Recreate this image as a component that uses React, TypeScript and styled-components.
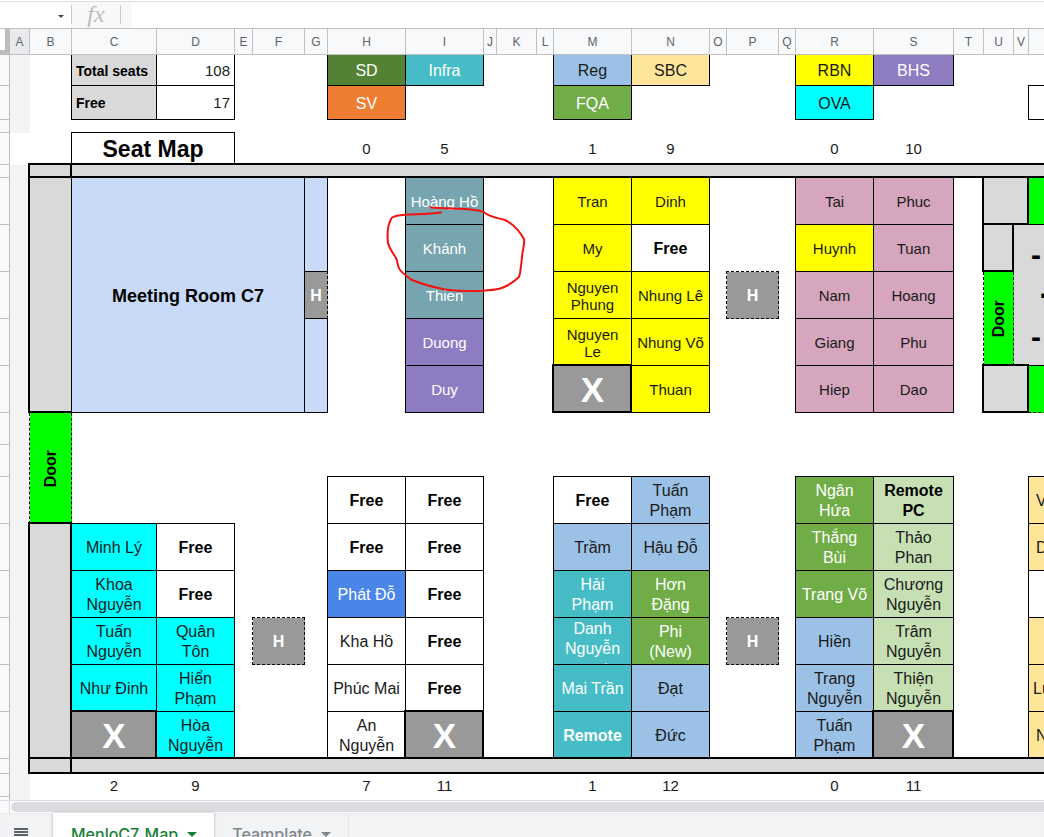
import React from "react";
import styled, { createGlobalStyle, css } from "styled-components";

const GlobalStyle = createGlobalStyle`
  * { box-sizing: border-box; }
  html, body { margin: 0; padding: 0; background: #fff; }
  body { font-family: "Liberation Sans", Arial, sans-serif; color: #000; overflow: hidden; }
`;

/* ---------- data ---------- */

const COLUMNS: [string, number][] = [
  ["A", 20], ["B", 42], ["C", 85], ["D", 78], ["E", 18], ["F", 52], ["G", 23],
  ["H", 78], ["I", 78], ["J", 13], ["K", 40], ["L", 17], ["M", 78], ["N", 78],
  ["O", 17], ["P", 52], ["Q", 17], ["R", 78], ["S", 80], ["T", 30], ["U", 30],
  ["V", 15], ["W", 78],
];

const ROWS = [31, 34, 13, 32, 13, 47, 47, 47, 47, 47, 32, 32, 47, 47, 47, 47, 47, 47, 15, 23, 3];

type Edge = "none" | "thin" | "thick" | "wall" | "dashed" | "dashedSides";

interface Cell {
  row: number;
  col: string;
  text?: string;
  fill?: string;
  edge?: Edge;
  rows?: number;
  cols?: number;
  size?: number;
  line?: number;
  bold?: boolean;
  color?: string;
  align?: "left" | "center" | "right";
  indent?: number;
  vertical?: boolean;
}

const C = {
  wall: "#d9d9d9",
  gutter: "#f3f3f3",
  door: "#00ff00",
  room: "#c9daf8",
  gray: "#999999",
  yellow: "#ffff00",
  cyan: "#00ffff",
  pink: "#d5a6bd",
  steel: "#76a5af",
  purple: "#8e7cc3",
  teal: "#46bdc6",
  blue: "#9bc1e6",
  green: "#70ad47",
  mint: "#c6e0b4",
  sand: "#ffe599",
  royal: "#4a86e8",
  white: "#ffffff",
};

const WHITE_TEXT = [C.steel, C.purple, C.teal, C.green, C.royal, "#548235", "#ed7d31"];

const seat = (row: number, col: string, text: string, fill: string = C.white, extra: Partial<Cell> = {}): Cell => ({
  row, col, text, fill, edge: "thin",
  size: row < 10 && row > 4 ? 15 : 16,
  line: row < 10 ? 17 : 20,
  color: WHITE_TEXT.includes(fill) ? "#fff" : "#1a1a1a",
  ...extra,
});
const free = (row: number, col: string) => seat(row, col, "Free", C.white, { bold: true, size: 16, color: "#000" });
const count = (row: number, col: string, text: string): Cell => ({ row, col, text, size: 15, color: "#1a1a1a" });
const blocked = (row: number, col: string): Cell => ({
  row, col, text: "X", fill: C.gray, edge: "thick", bold: true, color: "#fff", size: 35, line: 40,
});
const hub = (row: number, col: string): Cell => ({
  row, col, text: "H", fill: C.gray, edge: "dashed", bold: true, color: "#fff", size: 16,
});
const door = (row: number, col: string, rows: number): Cell => ({
  row, col, rows, text: "Door", fill: C.door, edge: "dashedSides", bold: true, size: 16, vertical: true,
});
const block = (row: number, col: string, fill: string, edge: Edge, rows = 1, cols = 1): Cell => ({
  row, col, fill, edge, rows, cols,
});

const CELLS: Cell[] = [
  block(0, "A", C.gutter, "none", 3),
  block(4, "A", C.gutter, "none", 17),

  { row: 0, col: "C", text: "Total seats", fill: C.wall, edge: "thin", bold: true, size: 14, align: "left" },
  { row: 0, col: "D", text: "108", edge: "thin", size: 15, align: "right", color: "#1a1a1a" },
  { row: 1, col: "C", text: "Free", fill: C.wall, edge: "thin", bold: true, size: 14, align: "left" },
  { row: 1, col: "D", text: "17", edge: "thin", size: 15, align: "right", color: "#1a1a1a" },
  { row: 3, col: "C", cols: 2, text: "Seat Map", fill: C.white, edge: "thin", bold: true, size: 23, line: 28 },

  seat(0, "H", "SD", "#548235"),
  seat(0, "I", "Infra", C.teal),
  seat(1, "H", "SV", "#ed7d31"),
  seat(0, "M", "Reg", C.blue),
  seat(0, "N", "SBC", C.sand),
  seat(1, "M", "FQA", C.green),
  seat(0, "R", "RBN", C.yellow),
  seat(0, "S", "BHS", C.purple),
  seat(1, "R", "OVA", C.cyan),
  block(1, "W", C.white, "thin"),

  count(3, "H", "0"), count(3, "I", "5"), count(3, "M", "1"),
  count(3, "N", "9"), count(3, "R", "0"), count(3, "S", "10"),

  block(4, "B", C.wall, "thick"),
  block(4, "C", C.wall, "thick", 1, 21),
  block(5, "B", C.wall, "wall", 5),
  { row: 5, col: "C", rows: 5, cols: 4, text: "Meeting Room C7", fill: C.room, edge: "thin", bold: true, size: 18, line: 22 },
  block(5, "G", C.room, "thin", 2),
  hub(7, "G"),
  block(8, "G", C.room, "thin", 2),

  seat(5, "I", "Hoàng Hồ", C.steel),
  seat(6, "I", "Khánh", C.steel),
  seat(7, "I", "Thien", C.steel),
  seat(8, "I", "Duong", C.purple),
  seat(9, "I", "Duy", C.purple),

  seat(5, "M", "Tran", C.yellow),
  seat(6, "M", "My", C.yellow),
  seat(7, "M", "Nguyen\nPhung", C.yellow),
  seat(8, "M", "Nguyen\nLe", C.yellow),
  blocked(9, "M"),
  seat(5, "N", "Dinh", C.yellow),
  free(6, "N"),
  seat(7, "N", "Nhung Lê", C.yellow),
  seat(8, "N", "Nhung Võ", C.yellow),
  seat(9, "N", "Thuan", C.yellow),

  hub(7, "P"),

  seat(5, "R", "Tai", C.pink),
  seat(6, "R", "Huynh", C.yellow),
  seat(7, "R", "Nam", C.pink),
  seat(8, "R", "Giang", C.pink),
  seat(9, "R", "Hiep", C.pink),
  seat(5, "S", "Phuc", C.pink),
  seat(6, "S", "Tuan", C.pink),
  seat(7, "S", "Hoang", C.pink),
  seat(8, "S", "Phu", C.pink),
  seat(9, "S", "Dao", C.pink),

  block(5, "U", C.wall, "thick", 1, 2),
  block(5, "W", C.door, "thin"),
  block(6, "U", C.wall, "thick"),
  {
    row: 6, col: "V", rows: 3, cols: 2, text: "-\n ·\n-", fill: C.wall, edge: "thin",
    bold: true, size: 30, line: 41, align: "left", indent: 17,
  },
  door(7, "U", 2),
  block(9, "U", C.wall, "thick", 1, 2),
  block(9, "W", C.door, "dashed"),

  door(10, "B", 3),
  block(13, "B", C.wall, "thick", 5),

  seat(13, "C", "Minh Lý", C.cyan),
  seat(14, "C", "Khoa\nNguyễn", C.cyan),
  seat(15, "C", "Tuấn\nNguyễn", C.cyan),
  seat(16, "C", "Như Đinh", C.cyan),
  blocked(17, "C"),
  free(13, "D"),
  free(14, "D"),
  seat(15, "D", "Quân\nTôn", C.cyan),
  seat(16, "D", "Hiển\nPhạm", C.cyan),
  seat(17, "D", "Hòa\nNguyễn", C.cyan),

  hub(15, "F"),

  free(12, "H"),
  free(13, "H"),
  seat(14, "H", "Phát Đỗ", C.royal),
  seat(15, "H", "Kha Hồ"),
  seat(16, "H", "Phúc Mai"),
  seat(17, "H", "An\nNguyễn"),
  free(12, "I"),
  free(13, "I"),
  free(14, "I"),
  free(15, "I"),
  free(16, "I"),
  blocked(17, "I"),

  free(12, "M"),
  seat(13, "M", "Trầm", C.blue),
  seat(14, "M", "Hải\nPhạm", C.teal),
  seat(15, "M", "Danh\nNguyễn\nremote", C.teal),
  seat(16, "M", "Mai Trần", C.teal),
  seat(17, "M", "Remote", C.teal, { bold: true }),
  seat(12, "N", "Tuấn\nPhạm", C.blue),
  seat(13, "N", "Hậu Đỗ", C.blue),
  seat(14, "N", "Hơn\nĐặng", C.green),
  seat(15, "N", "Phi\n(New)", C.green),
  seat(16, "N", "Đạt", C.blue),
  seat(17, "N", "Đức", C.blue),

  hub(15, "P"),

  seat(12, "R", "Ngân\nHứa", C.green),
  seat(13, "R", "Thắng\nBùi", C.green),
  seat(14, "R", "Trang Võ", C.green),
  seat(15, "R", "Hiền", C.blue),
  seat(16, "R", "Trang\nNguyễn", C.blue),
  seat(17, "R", "Tuấn\nPhạm", C.blue),
  seat(12, "S", "Remote\nPC", C.mint, { bold: true, color: "#000" }),
  seat(13, "S", "Thảo\nPhan", C.mint),
  seat(14, "S", "Chương\nNguyễn", C.mint),
  seat(15, "S", "Trâm\nNguyễn", C.mint),
  seat(16, "S", "Thiện\nNguyễn", C.mint),
  blocked(17, "S"),

  seat(12, "W", "V", C.sand, { align: "left", indent: 7 }),
  seat(13, "W", "D", C.sand, { align: "left", indent: 7 }),
  seat(14, "W", "", C.white),
  seat(15, "W", "", C.sand),
  seat(16, "W", "Lu", C.sand, { align: "left" }),
  seat(17, "W", "N", C.sand, { align: "left", indent: 7 }),

  block(18, "B", C.wall, "thick"),
  block(18, "C", C.wall, "thick", 1, 21),

  count(19, "C", "2"), count(19, "D", "9"), count(19, "H", "7"), count(19, "I", "11"),
  count(19, "M", "1"), count(19, "N", "12"), count(19, "R", "0"), count(19, "S", "11"),
];

/* ---------- styles ---------- */

const Page = styled.div`
  height: 100vh;
  overflow: hidden;
  display: flex;
  flex-direction: column;
`;

const FormulaBar = styled.header`
  flex: none;
  display: flex;
  height: 29px;
  padding-top: 1px;
  background: linear-gradient(#dadce0, #dadce0) 0 1px / 100% 1px no-repeat #fff;
  border-bottom: 1px solid #c0c0c0;
`;

const NameBox = styled.div`
  display: flex;
  align-items: center;
  width: 71px;
  padding: 4px 7px 0 0;
  flex: none;
`;

const BarInput = styled.input`
  flex: 1;
  min-width: 0;
  height: 20px;
  border: 0;
  outline: 0;
  background: transparent;
  font: 13px "Liberation Sans", Arial, sans-serif;
`;

const ArrowButton = styled.button`
  display: flex;
  align-items: center;
  justify-content: center;
  padding: 0;
  border: 0;
  background: transparent;
  color: #444;
`;

const FxLabel = styled.label`
  display: flex;
  align-items: center;
  justify-content: space-between;
  flex: none;
  width: 61px;
  margin-top: 1px;
  padding: 0 11px 2px 0;
  background: #f8f8f8;
  color: #bdbdbd;
  font: italic 24px/24px "Liberation Serif", serif;
`;

const Divider = styled.span`
  width: 1px;
  height: 19px;
  background: #c9c9c9;
`;

const Sheet = styled.main`
  position: relative;
  flex: 1 0 auto;
  overflow: hidden;
`;

const Grid = styled.table`
  table-layout: fixed;
  width: 100%;
  min-width: 1107px;
  border-collapse: separate;
  border-spacing: 0;
`;

const Corner = styled.th`
  height: 26px;
  padding: 0;
  background: #fff;
  border-right: 5px solid #bdbdbd;
  border-bottom: 5px solid #bdbdbd;
`;

const ColumnHead = styled.th<{ $active?: boolean }>`
  position: relative;
  z-index: 1;
  height: 26px;
  padding: 0;
  background: ${(p) => (p.$active ? "#e8eaed" : "#f8f9fa")};
  border-right: 1px solid #c0c0c0;
  border-bottom: 1px solid #c0c0c0;
  color: #5f6368;
  font-size: 12px;
  line-height: 14px;
  font-weight: 400;
`;

const RowHead = styled.th<{ $h: number }>`
  height: ${(p) => p.$h}px;
  padding: 0;
  background: #f8f9fa;
  border-right: 1px solid #c0c0c0;
  border-bottom: ${(p) => (p.$h > 3 ? "1px solid #c0c0c0" : "0")};
`;

/* Lines run along each cell's right and bottom edge, and reach back over the
   last pixels of the neighbours to the left and above. */
const edges = {
  none: css``,
  thin: css`
    box-shadow: -1px 0 #000, 0 -1px #000, -1px -1px #000, inset -1px -1px #000;
  `,
  thick: css`
    box-shadow: -2px 0 #000, 0 -2px #000, -2px -2px #000, inset -2px -2px #000;
  `,
  wall: css`
    box-shadow: -2px 0 #000, 0 -2px #000, -2px -2px #000, inset -1px -2px #000;
  `,
  dashed: css`
    &::after {
      content: "";
      position: absolute;
      inset: -1px 0 0 -1px;
      border: 1px dashed #000;
    }
  `,
  dashedSides: css`
    &::after {
      content: "";
      position: absolute;
      inset: 0 0 0 -1px;
      border: dashed #000;
      border-width: 0 1px;
    }
  `,
};

const GridCell = styled.td<{ $fill?: string; $edge: Edge; $align: string; $indent: number }>`
  position: relative;
  padding: ${(p) => (p.$align === "center" ? "0 1px 0 0" : `0 5px 0 ${p.$indent}px`)};
  background: ${(p) => p.$fill ?? "transparent"};
  text-align: ${(p) => p.$align};
  vertical-align: middle;
  ${(p) => edges[p.$edge]}
`;

const Blank = styled.td`
  padding: 0;
`;

const CellText = styled.div<{ $h: number; $size: number; $line: number; $bold?: boolean; $color?: string; $vertical?: boolean }>`
  max-height: ${(p) => p.$h}px;
  overflow: hidden;
  white-space: pre;
  font-size: ${(p) => p.$size}px;
  line-height: ${(p) => p.$line}px;
  font-weight: ${(p) => (p.$bold ? 700 : 400)};
  color: ${(p) => p.$color ?? "#000"};
  ${(p) =>
    p.$vertical &&
    css`
      display: inline-block;
      vertical-align: middle;
      writing-mode: vertical-rl;
      transform: rotate(180deg);
    `}
`;

const Ink = styled.svg`
  position: absolute;
  left: 380px;
  top: 171px;
  pointer-events: none;
`;

const ScrollStrip = styled.div`
  flex: none;
  display: flex;
  height: 13px;
  border-top: 1px solid #dadce0;
`;

const ScrollGutter = styled.div`
  width: 10px;
  background: #f8f9fa;
  border-right: 1px solid #dadce0;
`;

const Thumb = styled.div`
  flex: 1;
  margin: 1px 0 1px 1px;
  border-radius: 5px 0 0 5px;
  background: #dadce0;
`;

const TabBar = styled.nav`
  flex: none;
  display: flex;
  height: 42px;
  background: #f1f3f4;
  box-shadow: inset 0 1px 1px #e4e6e8;
`;

const MenuButton = styled.button`
  width: 53px;
  padding: 15px 0 0 14px;
  border: 0;
  background: transparent;
  color: #5f6368;
  display: flex;
  align-items: flex-start;
`;

const Tab = styled.button<{ $active?: boolean }>`
  display: flex;
  align-items: center;
  gap: 9px;
  padding: 0 17px 0 18px;
  border: 0;
  border-right: ${(p) => (p.$active ? "0" : "1px solid #e3e5e8")};
  background: ${(p) => (p.$active ? "#fff" : "transparent")};
  box-shadow: ${(p) => (p.$active ? "0 0 3px rgba(60, 64, 67, 0.35)" : "none")};
  color: ${(p) => (p.$active ? "#188038" : "#80868b")};
  font: 500 16px/20px Inter, Roboto, sans-serif;
`;

/* ---------- components ---------- */

const Caret = () => (
  <svg width="10" height="5" viewBox="0 0 10 5" aria-hidden="true">
    <path d="M0 0h10L5 5z" fill="currentColor" />
  </svg>
);

const columnIndex = (name: string) => COLUMNS.findIndex(([c]) => c === name);

function buildRow(row: number) {
  const out: React.ReactNode[] = [];
  const at = (c: number) => CELLS.find((x) => x.row === row && columnIndex(x.col) === c);
  const covered = (c: number) =>
    CELLS.some((x) => {
      const start = columnIndex(x.col);
      return x.row < row && x.row + (x.rows ?? 1) > row && c >= start && c < start + (x.cols ?? 1);
    });
  let c = 0;
  while (c < COLUMNS.length) {
    if (covered(c)) {
      c += 1;
      continue;
    }
    const cell = at(c);
    if (cell) {
      const rows = cell.rows ?? 1;
      const cols = cell.cols ?? 1;
      const height = ROWS.slice(row, row + rows).reduce((a, b) => a + b, 0);
      out.push(
        <GridCell
          key={c}
          rowSpan={rows}
          colSpan={cols}
          $fill={cell.fill}
          $edge={cell.edge ?? "none"}
          $align={cell.align ?? "center"}
          $indent={cell.indent ?? 4}
        >
          {cell.text && (
            <CellText
              $h={height - 1}
              $size={cell.size ?? 15}
              $line={cell.line ?? 20}
              $bold={cell.bold}
              $color={cell.color}
              $vertical={cell.vertical}
            >
              {cell.text}
            </CellText>
          )}
        </GridCell>
      );
      c += cols;
      continue;
    }
    let end = c + 1;
    while (end < COLUMNS.length && !at(end) && !covered(end)) end += 1;
    out.push(<Blank key={c} colSpan={end - c} />);
    c = end;
  }
  return out;
}

export default function App() {
  return (
    <Page>
      <GlobalStyle />
      <FormulaBar>
        <NameBox>
          <BarInput aria-label="Name box" />
          <ArrowButton aria-label="Named ranges">
            <svg width="6" height="3" viewBox="0 0 6 3" aria-hidden="true">
              <path d="M0 0h6L3 3z" fill="currentColor" />
            </svg>
          </ArrowButton>
        </NameBox>
        <FxLabel htmlFor="formula">
          <Divider />
          <span>fx</span>
          <Divider />
        </FxLabel>
        <BarInput id="formula" />
      </FormulaBar>

      <Sheet>
        <Grid>
          <colgroup>
            <col style={{ width: 10 }} />
            {COLUMNS.map(([name, width]) => (
              <col key={name} style={name === "W" ? undefined : { width }} />
            ))}
          </colgroup>
          <thead>
            <tr>
              <Corner aria-label="Select all" />
              {COLUMNS.map(([name]) => (
                <ColumnHead key={name} scope="col" $active={name === "A"}>
                  {name}
                </ColumnHead>
              ))}
            </tr>
          </thead>
          <tbody>
            {ROWS.map((h, row) => (
              <tr key={row}>
                <RowHead scope="row" $h={h} />
                {buildRow(row)}
              </tr>
            ))}
          </tbody>
        </Grid>
        <Ink width="150" height="130" viewBox="380 200 150 130" fill="none" aria-hidden="true">
          <path
            d="M431 207.500C445 209 460 208 475 210C480 211 483 211 485 213C490 217 498 218 505 220C513 224 520 232 524 239C525 245 522 251 522 258C521 264 521 271 519 277C515 281 509 285 503 287.500C497 290 490 290 483 290.700C470 291.500 457 291 445 289.500C433 287 421 284 411 279.500C407 276 403 274 400 270C397 266 398 262 396 258C393 253 389 248 388 243C387 234 387 225 392 217.500C396 215 402 215 408 214.500C420 214 431 214 441 212.500"
            stroke="#f5110f"
            strokeWidth="2"
            strokeLinecap="round"
            strokeLinejoin="round"
          />
        </Ink>
      </Sheet>

      <ScrollStrip>
        <ScrollGutter />
        <Thumb />
      </ScrollStrip>
      <TabBar>
        <MenuButton aria-label="All sheets">
          <svg width="14" height="11" viewBox="0 0 14 11" aria-hidden="true">
            <path d="M0 0h14v2H0zM0 3h14v2H0zM0 6h14v2H0zM0 9h14v2H0z" fill="currentColor" />
          </svg>
        </MenuButton>
        <Tab $active>
          MenloC7_Map <Caret />
        </Tab>
        <Tab>
          Teamplate <Caret />
        </Tab>
      </TabBar>
    </Page>
  );
}
